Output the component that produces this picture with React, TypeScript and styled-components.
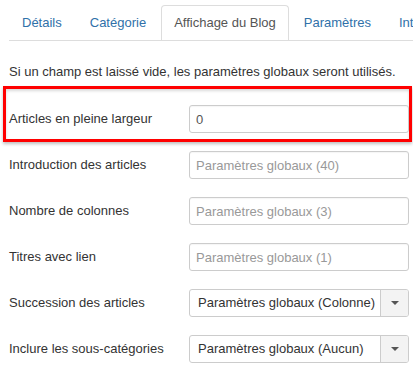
import React from 'react';
import styled, { createGlobalStyle } from 'styled-components';

const GlobalStyle = createGlobalStyle`
  html, body {
    margin: 0;
    padding: 0;
    background: #fff;
    overflow: hidden;
  }
  body {
    font-family: "Liberation Sans", Arial, sans-serif;
    font-size: 13px;
    line-height: 18px;
    color: #333;
  }
`;

const Page = styled.div`
  padding: 5px 4px 0 9px;
  width: 413px;
  box-sizing: border-box;
`;

const TabBar = styled.ul`
  display: flex;
  list-style: none;
  margin: 0 -4px 22px 0;
  padding: 0;
  border-bottom: 1px solid #ddd;
  white-space: nowrap;
  overflow: hidden;
`;

const Tab = styled.li<{ $active?: boolean }>`
  flex: none;
  margin: 0 2px -1px 0;
  padding: 8px 12px;
  line-height: 18px;
  border: 1px solid ${p => (p.$active ? '#ddd' : 'transparent')};
  border-bottom-color: ${p => (p.$active ? '#fff' : 'transparent')};
  border-radius: 4px 4px 0 0;
  background: ${p => (p.$active ? '#fff' : 'transparent')};
  color: ${p => (p.$active ? '#555' : '#3071a9')};
  cursor: pointer;
`;

const Intro = styled.p`
  margin: 0 0 5px;
  line-height: 18px;
`;

const Highlight = styled.div`
  margin: 0 -3px 9px -6px;
  padding: 16px 0 6px 3px;
  border: 3px solid #f00;
  box-shadow: 0 2px 3px rgba(0, 0, 0, 0.25), inset 0 2px 3px rgba(0, 0, 0, 0.15);
`;

const Row = styled.div<{ $last?: boolean }>`
  display: flex;
  align-items: center;
  height: 28px;
  margin-bottom: ${p => (p.$last ? '0' : '18px')};
`;

const Label = styled.label`
  width: 180px;
  flex: none;
  color: #333;
`;

const TextInput = styled.input`
  box-sizing: border-box;
  width: 220px;
  height: 28px;
  padding: 4px 6px;
  border: 1px solid #ccc;
  border-radius: 3px;
  font-family: inherit;
  font-size: 13px;
  line-height: 18px;
  color: #555;
  background: #fff;
  box-shadow: inset 0 1px 1px rgba(0, 0, 0, 0.04);
  outline: none;

  &::placeholder {
    color: #999;
  }
`;

const Select = styled.div`
  box-sizing: border-box;
  display: flex;
  width: 220px;
  height: 28px;
  border: 1px solid #ccc;
  border-radius: 3px;
  background: #fff;
  overflow: hidden;
`;

const SelectValue = styled.span`
  flex: 1;
  padding: 0 8px;
  line-height: 26px;
  color: #333;
  white-space: nowrap;
  overflow: hidden;
`;

const SelectButton = styled.span`
  flex: none;
  width: 27px;
  display: flex;
  align-items: center;
  justify-content: center;
  border-left: 1px solid #ccc;
  background: #f3f3f3;
`;

const Caret = styled.span`
  width: 0;
  height: 0;
  border-top: 4px solid #555;
  border-left: 4px solid transparent;
  border-right: 4px solid transparent;
`;

const tabs = ['Détails', 'Catégorie', 'Affichage du Blog', 'Paramètres', 'Intégration'];

const inputs = [
  { label: 'Introduction des articles', placeholder: 'Paramètres globaux (40)' },
  { label: 'Nombre de colonnes', placeholder: 'Paramètres globaux (3)' },
  { label: 'Titres avec lien', placeholder: 'Paramètres globaux (1)' },
];

const selects = [
  { label: 'Succession des articles', value: 'Paramètres globaux (Colonne)' },
  { label: 'Inclure les sous-catégories', value: 'Paramètres globaux (Aucun)' },
];

const App: React.FC = () => {
  return (
    <Page>
      <GlobalStyle />
      <TabBar>
        {tabs.map(t => (
          <Tab key={t} $active={t === 'Affichage du Blog'}>{t}</Tab>
        ))}
      </TabBar>

      <Intro>Si un champ est laissé vide, les paramètres globaux seront utilisés.</Intro>

      <Highlight>
        <Row $last>
          <Label>Articles en pleine largeur</Label>
          <TextInput defaultValue="0" />
        </Row>
      </Highlight>

      {inputs.map(f => (
        <Row key={f.label}>
          <Label>{f.label}</Label>
          <TextInput placeholder={f.placeholder} />
        </Row>
      ))}

      {selects.map((s, i) => (
        <Row key={s.label} $last={i === selects.length - 1}>
          <Label>{s.label}</Label>
          <Select>
            <SelectValue>{s.value}</SelectValue>
            <SelectButton>
              <Caret />
            </SelectButton>
          </Select>
        </Row>
      ))}
    </Page>
  );
};

export default App;
